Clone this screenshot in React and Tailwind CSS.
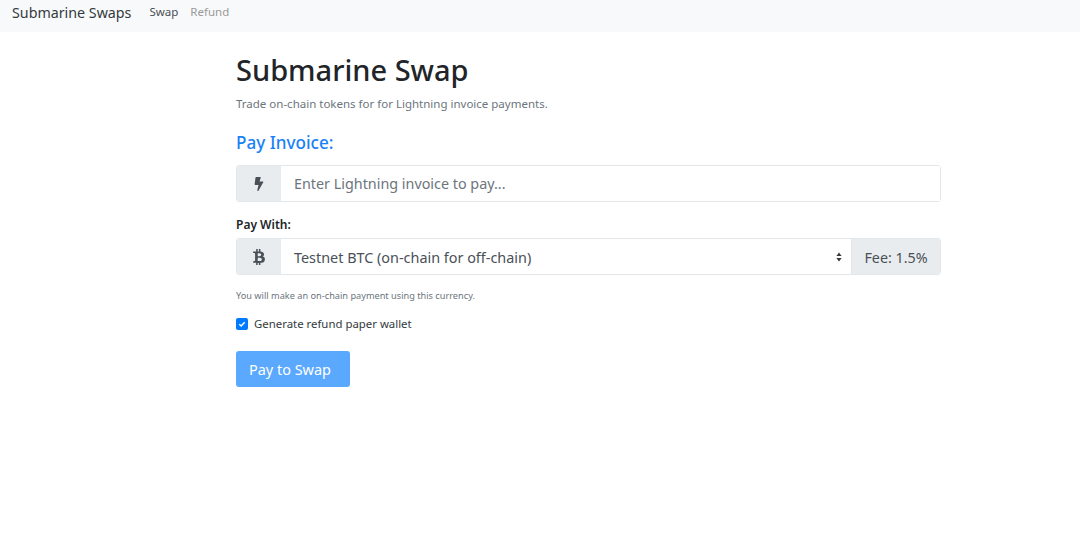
import React from 'react';
import { FaBolt, FaBtc } from 'react-icons/fa';

const App = () => {
  return (
    <div className="min-h-[540px] bg-white font-['Noto_Sans',sans-serif] text-[#212529]">
      {/* Navbar */}
      <nav className="flex h-8 items-center bg-[#f8f9fa] pl-3">
        <span className="relative top-[-3px] text-[14.25px] leading-none text-[#343a40]">Submarine Swaps</span>
        <div className="relative top-[-4px] ml-[18px] flex gap-[12px] text-[11.5px] leading-none">
          <span className="text-[#4b4f53]">Swap</span>
          <span className="text-[#9a9a9a]">Refund</span>
        </div>
      </nav>

      <main className="ml-[236px] w-[705px]">
        <h1 className="mt-[14px] text-[29px] font-medium leading-[48px] text-[#212529]">Submarine Swap</h1>
        <p className="mt-[2px] text-[11.5px] leading-[16px] text-[#6c757d]">
          Trade on-chain tokens for for Lightning invoice payments.
        </p>

        <h2 className="mt-[19px] text-[17.1px] font-medium leading-[24px] text-[#1a82f7]">Pay Invoice:</h2>

        <div className="mt-[10px] flex h-[37px] rounded-[3px] border border-[#e4e7ea]">
          <div className="flex w-[44px] items-center justify-center rounded-l-[3px] bg-[#e9ecef]">
            <FaBolt className="h-[14px] w-[14px] text-[#495057]" />
          </div>
          <input
            type="text"
            placeholder="Enter Lightning invoice to pay..."
            className="min-w-0 flex-1 bg-white pl-[13px] text-[14.35px] text-[#495057] outline-none placeholder:text-[#6c757d]"
          />
        </div>

        <label className="mt-[15px] block text-[12px] font-semibold leading-[16px] text-[#212529]">Pay With:</label>

        <div className="mt-[5px] flex h-[37px] rounded-[3px] border border-[#e4e7ea]">
          <div className="flex w-[44px] items-center justify-center rounded-l-[3px] bg-[#e9ecef]">
            <FaBtc className="h-[16px] w-[16px] text-[#495057]" />
          </div>
          <div className="relative flex min-w-0 flex-1 items-center pl-[13px] pt-[2px] text-[14.4px] text-[#495057]">
            Testnet BTC (on-chain for off-chain)
            <svg viewBox="0 0 8 12" className="absolute right-[9px] top-[13px] h-[10px] w-[6px]" fill="#343a40">
              <path d="M4 0 7.5 4.8H.5zM4 12 .5 7.2h7z" />
            </svg>
          </div>
          <div className="flex w-[89px] items-center justify-center rounded-r-[3px] border-l border-[#e4e7ea] bg-[#e9ecef] pt-[2px] text-[14.3px] text-[#495057]">
            Fee: 1.5%
          </div>
        </div>

        <p className="mt-[14px] text-[9.2px] leading-[14px] text-[#6c757d]">You will make an on-chain payment using this currency.</p>

        <div className="mt-[13px] flex items-center gap-[6px]">
          <span className="flex h-3 w-3 items-center justify-center rounded-[2px] bg-[#007bff]">
            <svg viewBox="0 0 8 8" className="h-[8px] w-[8px]" fill="none" stroke="white" strokeWidth="1.5">
              <path d="M1.3 4.3 3.1 6 6.7 2.2" />
            </svg>
          </span>
          <span className="text-[11.4px] leading-[16px] text-[#343a40]">Generate refund paper wallet</span>
        </div>

        <button className="mt-[19px] block h-[36px] w-[114px] rounded-[3px] bg-[#5aa9ff] pl-[13px] pt-[2px] text-left text-[14.45px] text-white">
          Pay to Swap
        </button>
      </main>
    </div>
  );
};

export default App;
